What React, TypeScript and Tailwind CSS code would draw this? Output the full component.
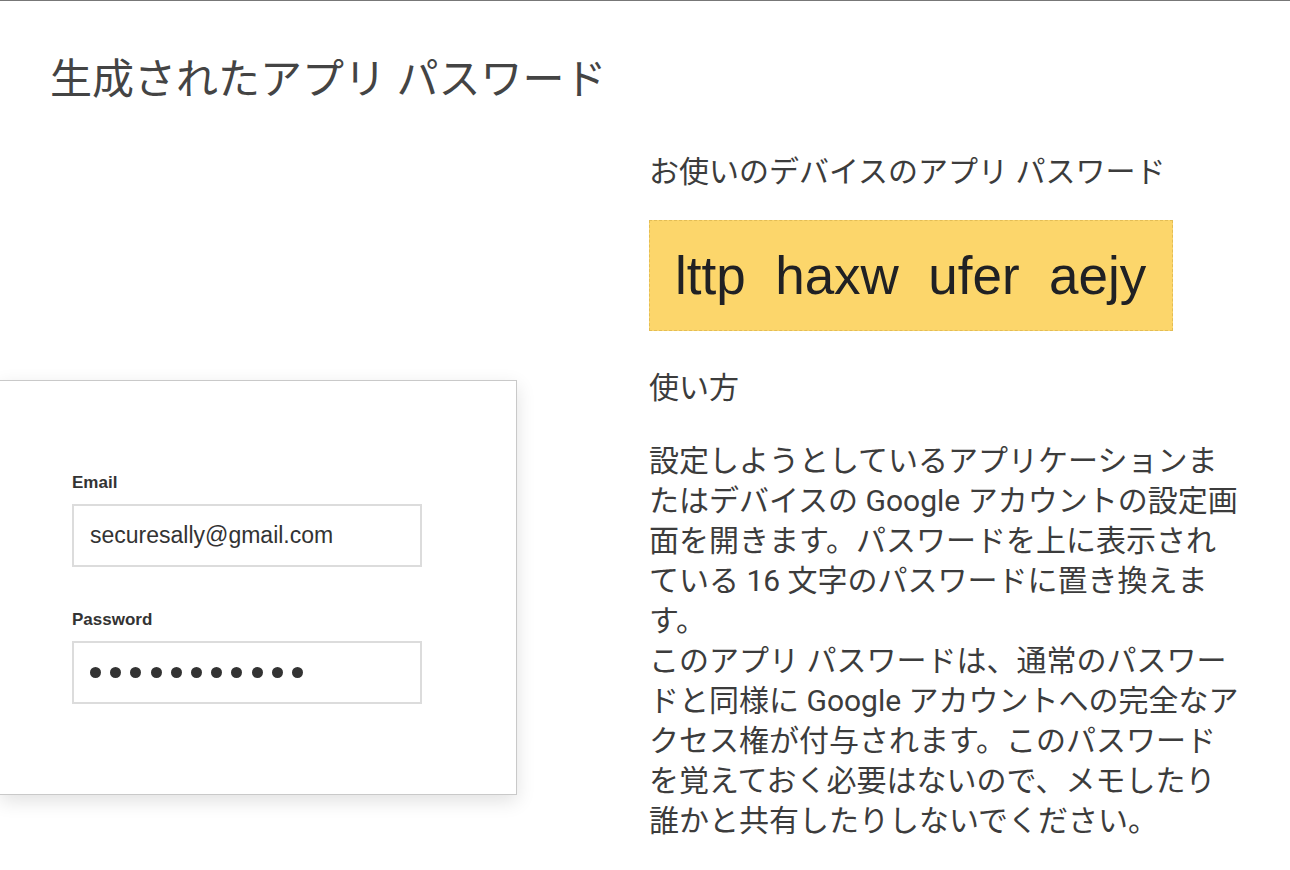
import React from "react";

const jp = "font-['Roboto','Noto_Sans_CJK_JP',sans-serif]";
const arial = "font-['Liberation_Sans',Arial,sans-serif]";

function Field({ label, children }: { label: string; children: React.ReactNode }) {
    return (
        <div className="flex flex-col">
            <label className={`${arial} text-[17px] font-bold leading-[20px] text-[#333]`}>{label}</label>
            <div className="mt-[11px] flex h-[63px] w-[350px] items-center border-2 border-[#dcdcdc] px-[16px]">
                {children}
            </div>
        </div>
    );
}

export default function App() {
    const dots = Array.from({ length: 11 });

    return (
        <div className={`${jp} h-[870px] w-[1290px] overflow-hidden border-t border-[#777] bg-white text-[#3c3c3c]`}>
            <h1 className="pl-[50px] pt-[55px] text-[42px] font-normal leading-[48px] text-[#444]">
                生成されたアプリ パスワード
            </h1>

            <div className="flex">
                {/* sample sign-in form */}
                <div className="w-[649px] shrink-0 pt-[276px]">
                    <div className="h-[415px] w-[517px] border-y border-r border-[#c9c9c9] bg-white pl-[72px] pt-[92px] shadow-[0_6px_18px_rgba(0,0,0,0.12)]">
                        <Field label="Email">
                            <span className={`${arial} text-[23px] text-[#333]`}>securesally@gmail.com</span>
                        </Field>
                        <div className="mt-[43px]">
                            <Field label="Password">
                                <div className="flex gap-[9.2px]">
                                    {dots.map((_, i) => (
                                        <span key={i} className="h-[11px] w-[11px] rounded-full bg-[#333]" />
                                    ))}
                                </div>
                            </Field>
                        </div>
                    </div>
                </div>

                {/* instructions */}
                <div className="w-[592px] pt-[48px]">
                    <p className="text-[30px] leading-[40px]">お使いのデバイスのアプリ パスワード</p>
                    <div className="mt-[28px] flex h-[111px] w-[524px] items-center border border-dashed border-[#e3bd55] bg-[#fcd66b] pl-[25px]">
                        <span className={`${arial} whitespace-pre text-[53px] text-[#202124]`}>lttp  haxw  ufer  aejy</span>
                    </div>
                    <p className="mt-[37px] text-[30px] leading-[40px]">使い方</p>
                    <p className="mt-[33px] text-[30px] leading-[40px]">
                        設定しようとしているアプリケーションまたはデバイスの Google アカウントの設定画面を開きます。パスワードを上に表示されている 16 文字のパスワードに置き換えます。
                        <br />
                        このアプリ パスワードは、通常のパスワードと同様に Google アカウントへの完全なアクセス権が付与されます。このパスワードを覚えておく必要はないので、メモしたり誰かと共有したりしないでください。
                    </p>
                </div>
            </div>
        </div>
    );
}
